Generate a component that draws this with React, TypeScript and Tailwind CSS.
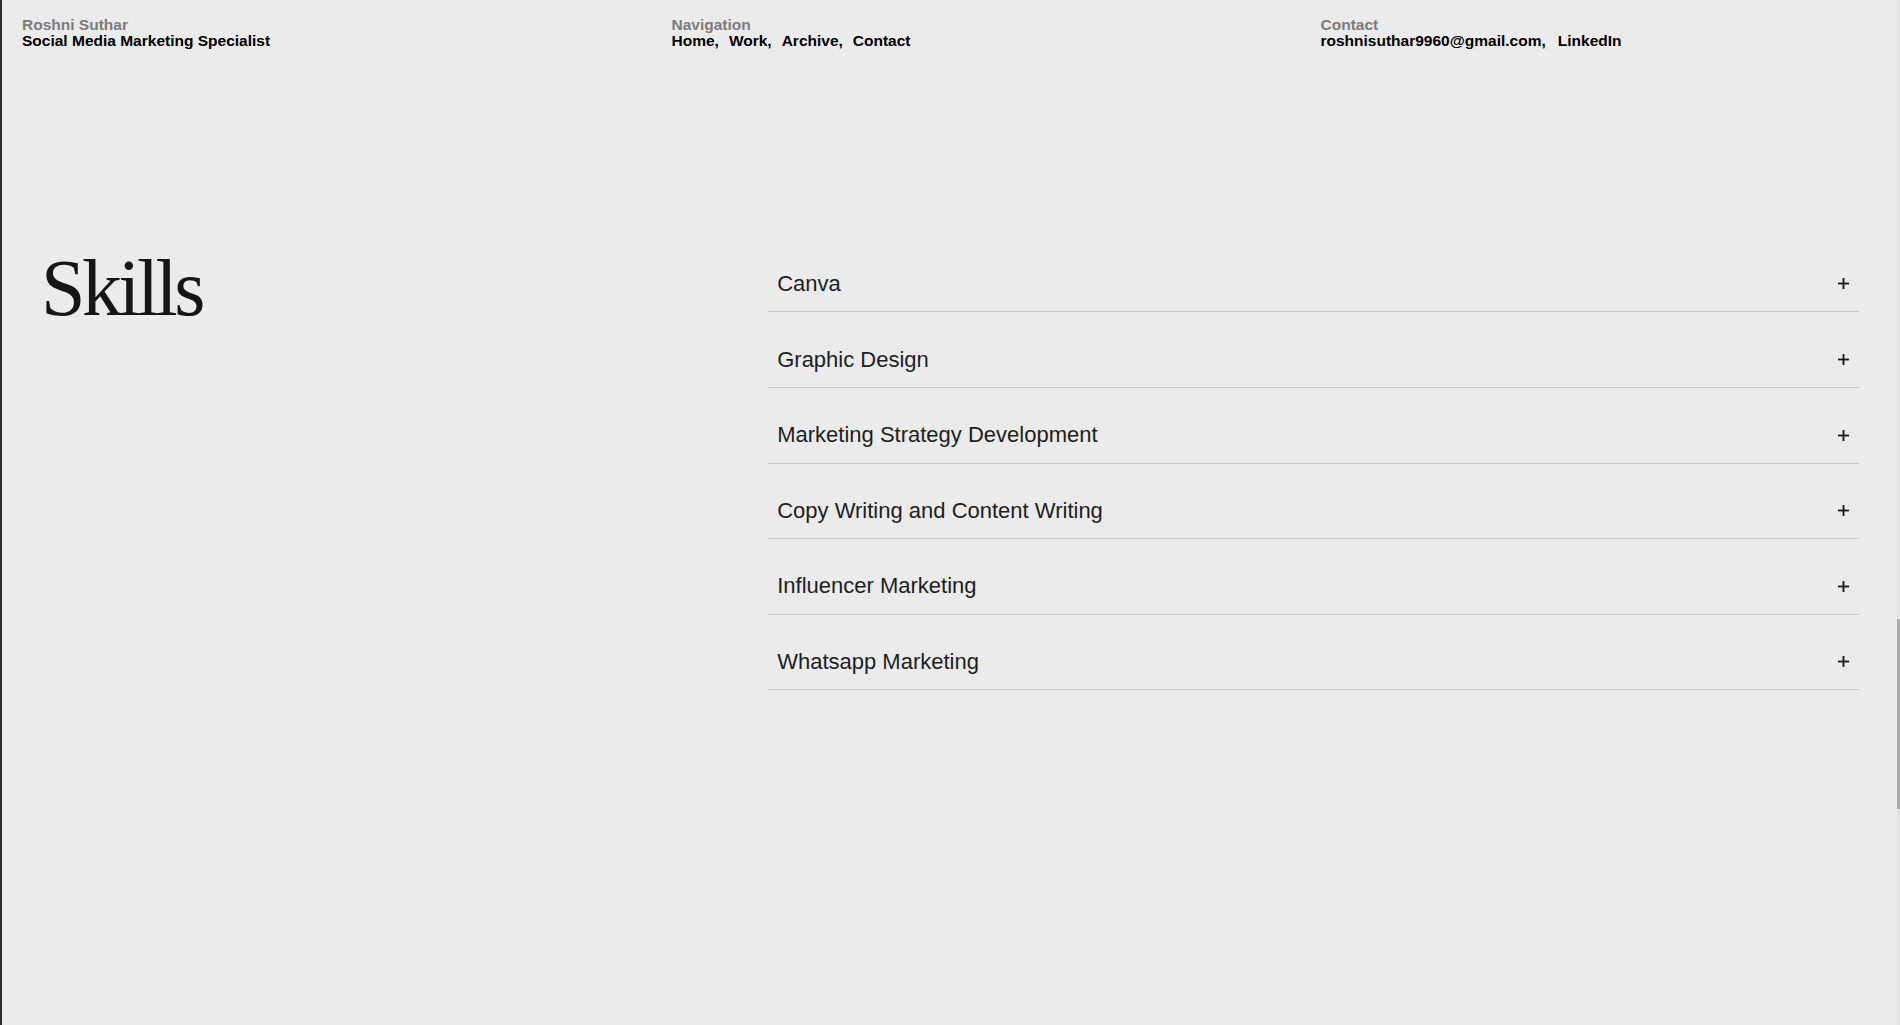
import React from "react";

const skills = [
  "Canva",
  "Graphic Design",
  "Marketing Strategy Development",
  "Copy Writing and Content Writing",
  "Influencer Marketing",
  "Whatsapp Marketing",
];

function Plus() {
  return (
    <svg width="11" height="11" viewBox="0 0 11 11" className="shrink-0">
      <rect x="4.6" y="0" width="1.8" height="11" fill="#161616" />
      <rect x="0" y="4.6" width="11" height="1.8" fill="#161616" />
    </svg>
  );
}

export default function App() {
  return (
    <div
      className="relative w-full h-[1025px] overflow-hidden bg-[#ebebeb] border-l-2 border-[#2e2e2e] text-black"
      style={{ fontFamily: '"Liberation Sans", Arial, sans-serif' }}
    >
      {/* Header */}
      <header className="grid grid-cols-[649.5px_649px_1fr] pl-[20px] pt-[16.5px] text-[15.5px] font-bold leading-[16.5px]">
        <div>
          <div className="text-[#7b7b7b]">Roshni Suthar</div>
          <div>Social Media Marketing Specialist</div>
        </div>
        <div>
          <div className="text-[#7b7b7b]">Navigation</div>
          <div className="flex gap-[10px]">
            <span>Home,</span>
            <span>Work,</span>
            <span>Archive,</span>
            <span>Contact</span>
          </div>
        </div>
        <div>
          <div className="text-[#7b7b7b]">Contact</div>
          <div className="flex gap-[12px]">
            <span>roshnisuthar9960@gmail.com,</span>
            <span>LinkedIn</span>
          </div>
        </div>
      </header>

      {/* Skills section */}
      <section className="grid grid-cols-[2fr_3fr] pl-[39px] pr-[41px] mt-[187.3px]">
        <div>
          <h2
            className="mt-[11px] text-[80px] leading-[80px] font-normal tracking-[-0.045em] text-[#161616]"
            style={{ fontFamily: '"Liberation Serif", "Times New Roman", serif' }}
          >
            Skills
          </h2>
        </div>
        <div className="flex flex-col">
          {skills.map((s) => (
            <div
              key={s}
              className="flex items-center justify-between pl-[9px] pr-[10.5px] pt-[34.2px] pb-[14.4px] border-b border-[#c9c9c9]"
            >
              <span className="text-[22px] leading-[26px] text-[#1e1e1e]">{s}</span>
              <Plus />
            </div>
          ))}
        </div>
      </section>

      {/* Scrollbar overlay */}
      <div className="absolute right-0 top-0 h-full w-[3px] bg-[#e4e4e4]">
        <div className="absolute left-0 top-[619px] h-[190px] w-[3px] bg-[#a9a9a9]" />
      </div>
    </div>
  );
}
